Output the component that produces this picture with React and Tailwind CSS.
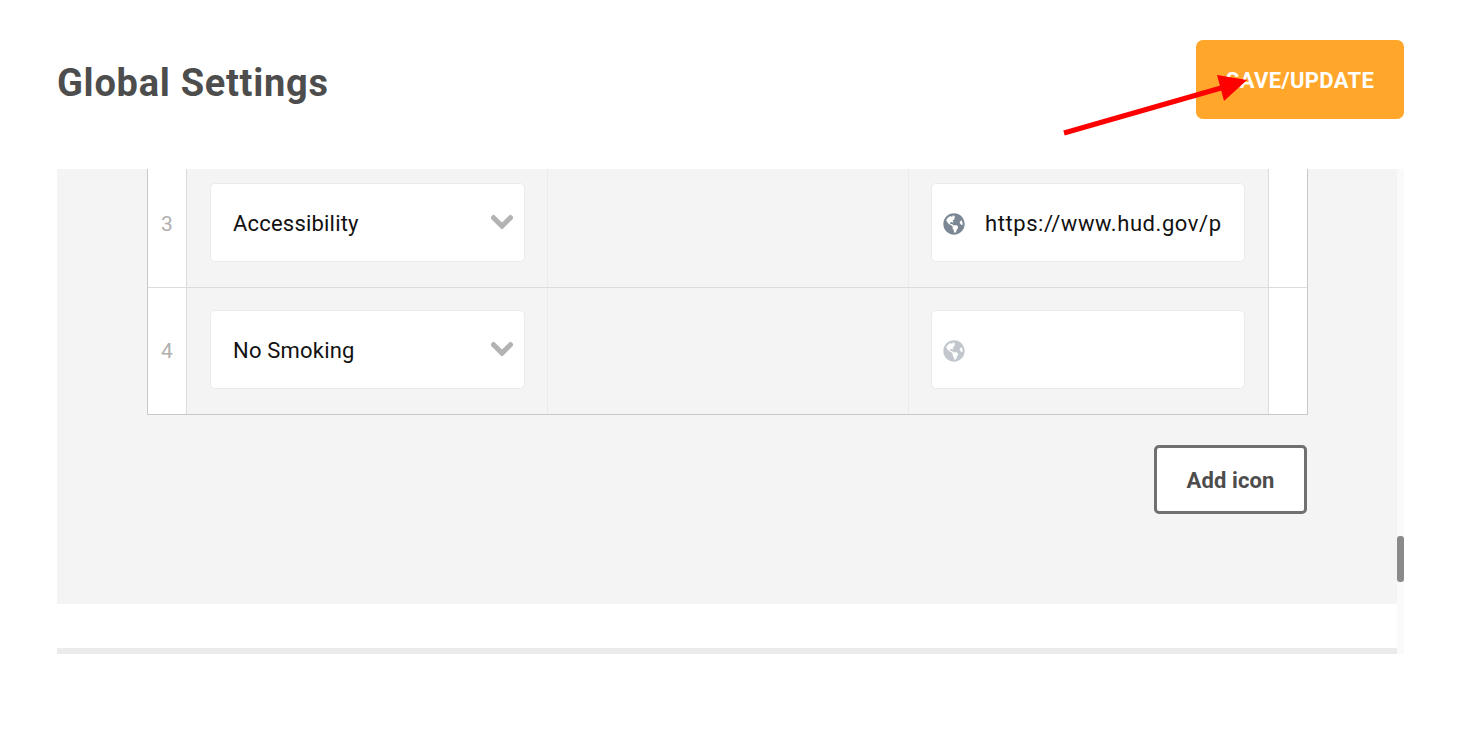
// App.jsx
import { FaChevronDown, FaGlobeAmericas } from 'react-icons/fa';

const rows = [
  { num: 3, label: 'Accessibility', url: 'https://www.hud.gov/p' },
  { num: 4, label: 'No Smoking', url: '' },
];

function IconRow({ num, label, url }) {
  return (
    <div className="flex h-[127px] border-b border-[#dcdcdc] last:border-[#c8c8c8]">
      <div className="flex w-[39px] items-center justify-center border-r border-[#dcdcdc] bg-white pt-[2px] text-[21px] text-[#b0b0b0]">
        {num}
      </div>

      {/* Icon select */}
      <div className="w-[361px] border-r border-[#ebebeb] pt-[22px] pl-[23px]">
        <div className="relative flex h-[79px] w-[315px] items-center rounded-[5px] border border-[#ebebeb] bg-white pt-[2px] pl-[22px] text-[22px] tracking-[0.2px] text-[#111111]">
          {label}
          <FaChevronDown
            className="absolute top-[25px] right-[11px] h-[26px] w-[22px] text-[#b3b3b3]"
            stroke="currentColor"
            strokeWidth="24"
          />
        </div>
      </div>

      <div className="w-[361px] border-r border-[#ebebeb]" />

      {/* Link */}
      <div className="w-[360px] border-r border-[#dcdcdc] pt-[22px] pl-[22px]">
        <div className="flex h-[79px] w-[314px] items-center rounded-[5px] border border-[#ebebeb] bg-white pt-[2px] pl-[11px] text-[22px] tracking-[0.57px] text-[#111111]">
          <FaGlobeAmericas className={url ? 'h-[22px] w-[22px] text-[#7b8794]' : 'h-[22px] w-[22px] text-[#c1c7cd]'} />
          <span className="ml-[20px] whitespace-nowrap">{url}</span>
        </div>
      </div>

      <div className="flex-1 bg-white" />
    </div>
  );
}

export default function App() {
  return (
    <div className="relative h-[735px] overflow-hidden bg-white font-['Roboto',sans-serif]">
      <header className="flex h-[169px] items-start justify-between pr-[60px] pl-[57px]">
        <h1 className="mt-[59px] text-[38px] leading-[48px] font-bold tracking-[0.72px] text-[#4d4d4d]">
          Global Settings
        </h1>
        <button className="mt-[40px] h-[79px] w-[208px] rounded-[7px] bg-[#ffa62b] pt-[2px] text-[22px] font-bold tracking-[0.35px] text-white">
          SAVE/UPDATE
        </button>
      </header>

      <div className="ml-[57px] flex w-[1347px]">
        <div className="w-[1340px]">
          <div className="h-[435px] overflow-hidden bg-[#f4f4f4] pl-[90px]">
            <div className="-mt-[8px] w-[1161px] border-x border-[#c8c8c8]">
              {rows.map((row) => (
                <IconRow key={row.num} {...row} />
              ))}
            </div>
            <div className="mt-[30px] flex w-[1160px] justify-end">
              <button className="h-[69px] w-[153px] rounded-[5px] border-[3px] border-[#707070] bg-white pt-[2px] text-[22px] font-bold tracking-[0.1px] text-[#4d4d4d]">
                Add icon
              </button>
            </div>
          </div>
          <div className="mt-[44px] h-[6px] bg-[#ebebeb]" />
        </div>

        {/* Scroll track */}
        <div className="h-[485px] w-[7px] bg-[#fafafc] pt-[367px]">
          <div className="h-[46px] rounded-[3px] bg-[#8a8a8a]" />
        </div>
      </div>

      {/* Annotation arrow */}
      <svg className="absolute top-0 left-0" width="1464" height="735" fill="none">
        <line x1="1064" y1="133" x2="1228" y2="86" stroke="#ff0000" strokeWidth="5" />
        <polygon points="1247,80 1217,75 1224,101" fill="#ff0000" />
      </svg>
    </div>
  );
}
